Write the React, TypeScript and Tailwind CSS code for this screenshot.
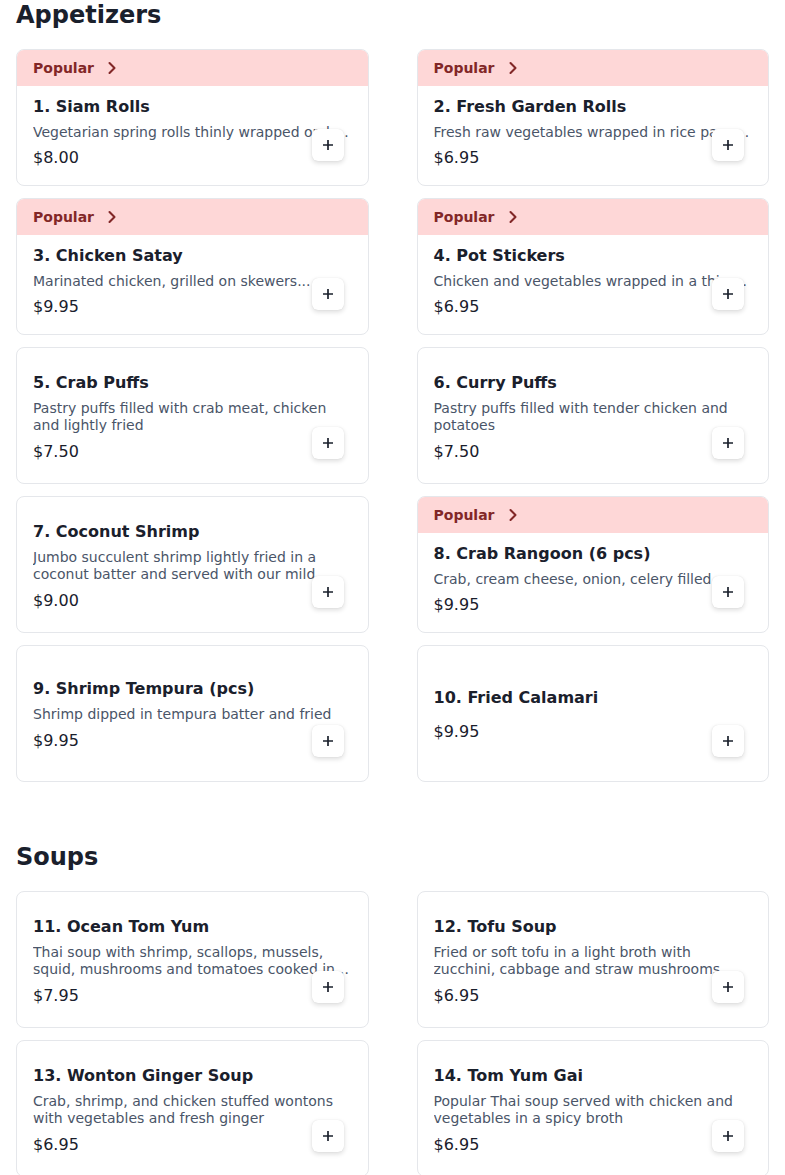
import React from 'react';

interface MenuItem {
  id: number;
  name: string;
  description?: string;
  price: string;
  popular?: boolean;
}

interface MenuSection {
  title: string;
  items: MenuItem[];
}

const sections: MenuSection[] = [
  {
    title: 'Appetizers',
    items: [
      { id: 1, name: 'Siam Rolls', description: 'Vegetarian spring rolls thinly wrapped on homemade wrappers and served with plum sauce', price: '$8.00', popular: true },
      { id: 2, name: 'Fresh Garden Rolls', description: 'Fresh raw vegetables wrapped in rice paper served with peanut sauce', price: '$6.95', popular: true },
      { id: 3, name: 'Chicken Satay', description: 'Marinated chicken, grilled on skewers...', price: '$9.95', popular: true },
      { id: 4, name: 'Pot Stickers', description: 'Chicken and vegetables wrapped in a thin dough and pan fried', price: '$6.95', popular: true },
      { id: 5, name: 'Crab Puffs', description: 'Pastry puffs filled with crab meat, chicken and lightly fried', price: '$7.50' },
      { id: 6, name: 'Curry Puffs', description: 'Pastry puffs filled with tender chicken and potatoes', price: '$7.50' },
      { id: 7, name: 'Coconut Shrimp', description: 'Jumbo succulent shrimp lightly fried in a coconut batter and served with our mild sweet and sour sauce', price: '$9.00' },
      { id: 8, name: 'Crab Rangoon (6 pcs)', description: 'Crab, cream cheese, onion, celery filled', price: '$9.95', popular: true },
      { id: 9, name: 'Shrimp Tempura (pcs)', description: 'Shrimp dipped in tempura batter and fried', price: '$9.95' },
      { id: 10, name: 'Fried Calamari', price: '$9.95' },
    ],
  },
  {
    title: 'Soups',
    items: [
      { id: 11, name: 'Ocean Tom Yum', description: 'Thai soup with shrimp, scallops, mussels, squid, mushrooms and tomatoes cooked in a spicy lemongrass broth', price: '$7.95' },
      { id: 12, name: 'Tofu Soup', description: 'Fried or soft tofu in a light broth with zucchini, cabbage and straw mushrooms', price: '$6.95' },
      { id: 13, name: 'Wonton Ginger Soup', description: 'Crab, shrimp, and chicken stuffed wontons with vegetables and fresh ginger', price: '$6.95' },
      { id: 14, name: 'Tom Yum Gai', description: 'Popular Thai soup served with chicken and vegetables in a spicy broth', price: '$6.95' },
    ],
  },
];

const ItemCard: React.FC<{ item: MenuItem }> = ({ item }) => (
  <div className="relative flex h-[137px] flex-col overflow-hidden rounded-lg border border-[#e5e7eb] bg-white">
    {item.popular && (
      <div className="flex h-9 shrink-0 items-center bg-[#fed7d7] px-4 text-sm font-bold text-[#822727]">
        Popular
        <svg className="ml-2 h-5 w-5" viewBox="0 0 24 24" fill="none" stroke="currentColor" strokeWidth={2.5} strokeLinecap="round" strokeLinejoin="round">
          <path d="m9 18 6-6-6-6" />
        </svg>
      </div>
    )}

    {/* body */}
    <div className={`flex flex-1 flex-col px-4 ${item.popular ? 'justify-start pt-2' : 'justify-center pt-[3px]'}`}>
      <div className={`text-base font-bold leading-6 text-[#1a202c] ${item.popular ? 'mt-px' : ''}`}>
        {item.id}. {item.name}
      </div>
      <p className={`mt-[5px] text-sm leading-[17.5px] text-[#4a5568] ${item.popular ? 'truncate' : 'line-clamp-2'}`}>
        {item.description}
      </p>
      <div className={`text-base leading-6 text-[#1a202c] ${item.popular ? 'mt-1' : 'mt-[5px]'}`}>{item.price}</div>
    </div>

    <button
      className="absolute bottom-6 right-6 flex h-8 w-8 items-center justify-center rounded-md bg-white text-[#1a202c] shadow-[0_2px_5px_rgba(0,0,0,0.14),0_0_1px_rgba(0,0,0,0.12)]"
      aria-label={`Add ${item.name}`}
    >
      <svg className="h-3 w-3" viewBox="0 0 12 12" fill="none" stroke="currentColor" strokeWidth={1.7}>
        <path d="M6 1v10M1 6h10" />
      </svg>
    </button>
  </div>
);

export default function App() {
  return (
    <div className="min-h-screen bg-white px-4 font-['DejaVu_Sans',sans-serif]">
      <div className="flex flex-col gap-[60px]">
        {sections.map(section => (
          <section key={section.title}>
            <h2 className="mb-[19px] text-2xl font-bold leading-[30px] text-[#1a202c]">{section.title}</h2>
            <div className="grid grid-cols-2 gap-x-12 gap-y-3">
              {section.items.map(item => (
                <ItemCard key={item.id} item={item} />
              ))}
            </div>
          </section>
        ))}
      </div>
    </div>
  );
}
